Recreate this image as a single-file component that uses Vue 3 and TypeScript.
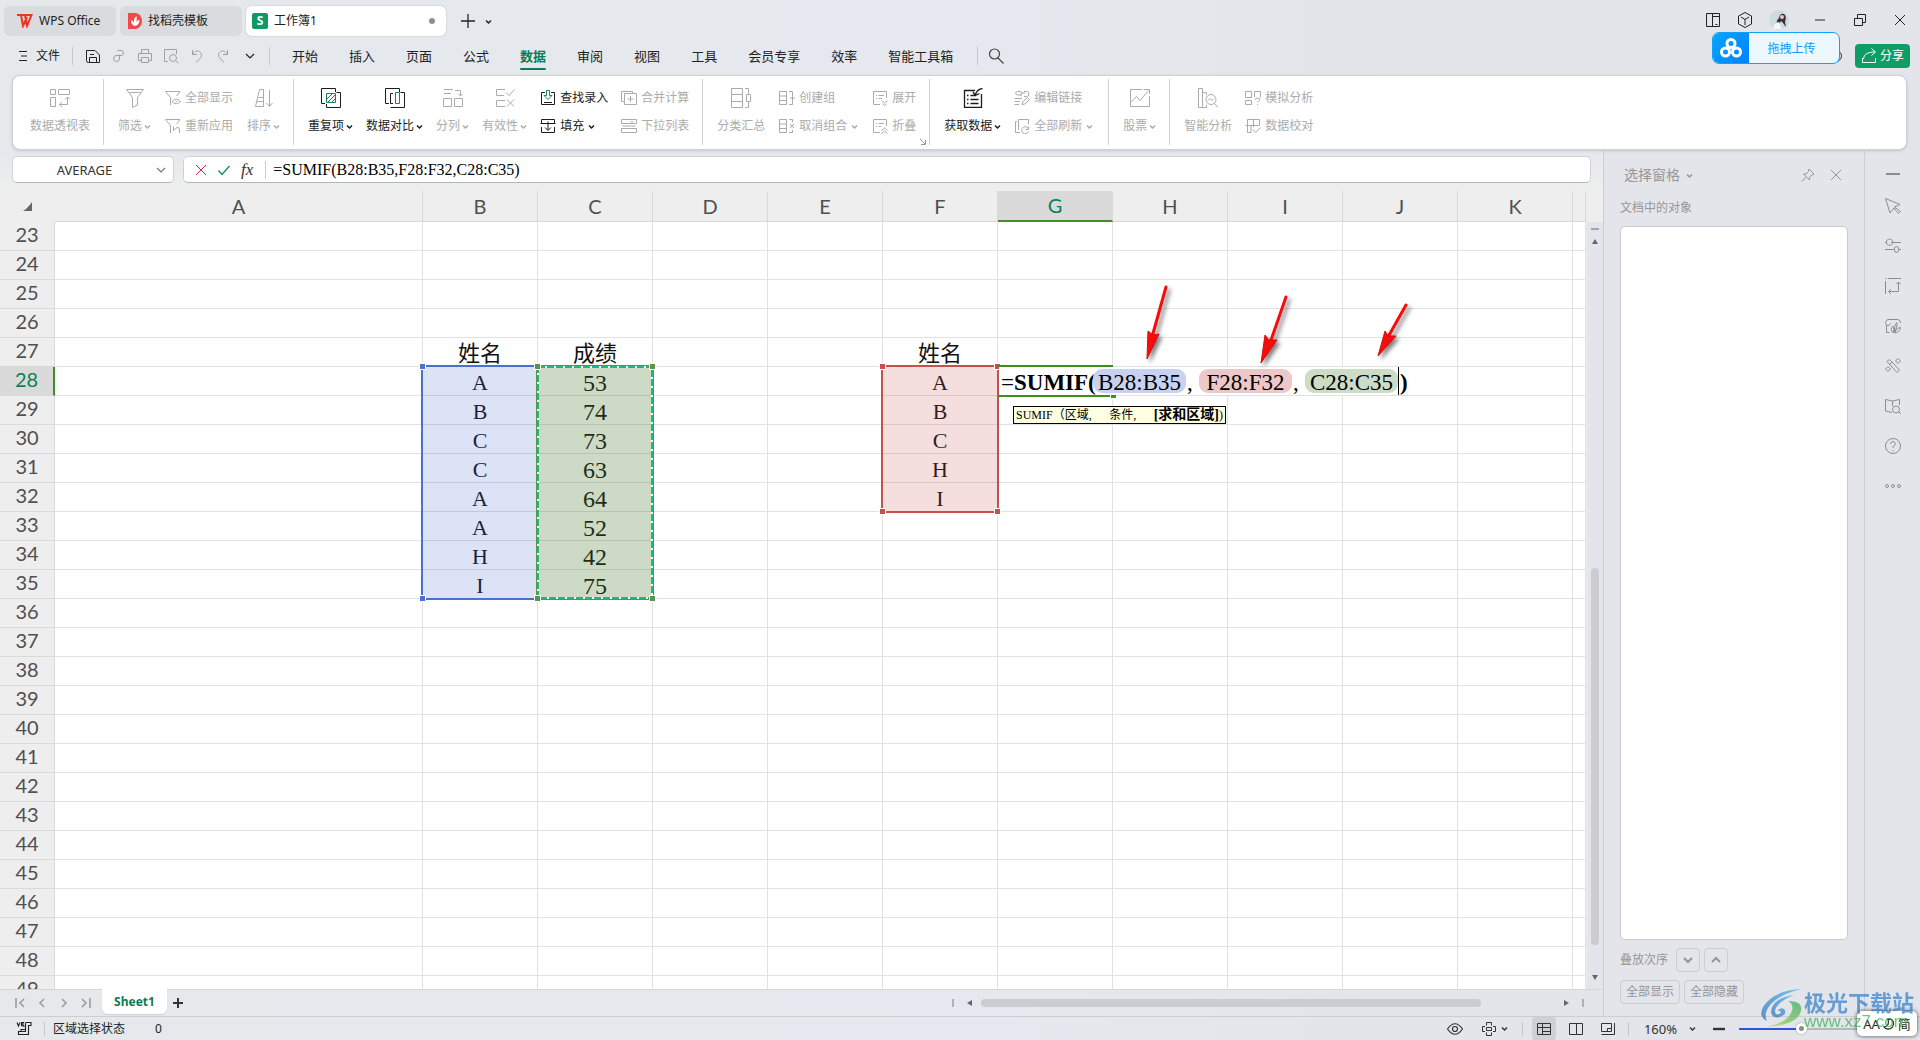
<script setup lang="ts">
import { h, ref } from 'vue'

interface Glyph {
  s: number
  d: string
  g?: string
  w?: number
}

const glyphs: Record<string, Glyph> = {
  burger: { s: 10, d: 'M1 .5H9M3 5H9M1 9.5H9' },
  save: { s: 16, d: 'M1.500 2.500H10L14.500 7V14.500H3.500Q1.500 14.500 1.500 12.500ZM4.500 14V9.500H11.500V14M5 6.500H9' },
  link: { s: 16, d: 'M6.500 2.500H10A2.500 2.500 0 0 1 10 7.500H6A3 3 0 1 0 8.500 11V6.500' },
  print: { s: 16, d: 'M4.500 5.500V1.500H11.500V5.500M4 12.500H1.500V5.500H14.500V12.500H12M4.500 9.500H11.500V14.500H4.500Z' },
  preview: { s: 16, d: 'M5 13.500H1.500V1.500H13.500V6M10 6.500A3.500 3.500 0 1 0 10 13.500A3.500 3.500 0 1 0 10 6.500M12.500 12.500L15.500 15.500' },
  undo: { s: 16, d: 'M3.500 2V6.500H8M3.500 6.500C6 2.500 9 2 11.500 4.500C14 8 11 10.500 7 14.500' },
  redo: { s: 16, d: 'M12.500 2V6.500H8M12.500 6.500C10 2.500 7 2 4.500 4.500C2 8 5 10.500 9 14.500' },
  down: { s: 10, d: 'M1 3L5 7L9 3', w: 1.2 },
  chev: { s: 7, d: 'M1 2.500L3.500 5L6 2.500', w: 1.5 },
  search: { s: 16, d: 'M6.500 1A5 5 0 1 0 6.500 11A5 5 0 1 0 6.500 1M10 10L15.500 15.500', w: 1.2 },
  pivot: { s: 20, d: 'M.5 1.500H5.500V6.500H.5ZM8.500 1.500H19.500V6.500H8.500ZM.5 9.500H5.500V18.500H.5ZM9.500 16.500H17.500V9M15 11.500L17.500 9L20 11.500M12 14L9.500 16.500L12 19' },
  filter: { s: 20, d: 'M1.500 1.500H18.500L12.500 9.500V17L7.500 19.500V9.500ZM4.500 4.500H15.500' },
  filtereye: { s: 16, d: 'M5.500 15V7.500L.5 1.500H15L11.500 6M7 11.500Q11 7 15.500 11.500Q11 16 7 11.500M10.500 11.500H12' },
  refilter: { s: 16, d: 'M5.500 15V7.500L.5 1.500H15L11.500 6M8.500 8.500V12.500M8.500 12.500L12 9.500Q15 9 14.500 12V15' },
  sort: { s: 20, d: 'M5.500 1.500H9.500V18.500H1.500L5.500 1.500M4.500 9.500H9M3 13.500H9M15.500 2V18M12.500 15L15.500 18.500L18.500 15' },
  dup: { s: 20, d: 'M4 15.500H.5V.5H14.500V4M15.500 4.500H19.500V19.500H5.500V16', g: 'M5.500 5.500H14.500V14.500H5.500ZM6 11L11 6M7 14L14 7M10.500 14.500L14.500 10.500' },
  compare: { s: 20, d: 'M4 15.500H.5V.5H14.500V4M8 5.500H5.500V15.500H8M15.500 4.500H19.500V19.500H5.500', g: 'M10.500 4.500H14.500V15.500H10.500Z' },
  split: { s: 20, d: 'M1 1.500H10M1 5.500H8M.5 10.500H8.500V18.500H.5ZM11.500 10.500H19.500V18.500H11.500ZM12 2.500H17.500V8M15 5.500L17.500 8L20 5.500' },
  valid: { s: 20, d: 'M10 1.500H1.500V7.500H9M10 12.500H1.500V18.500H10M11 4.500L14 7.500L19.500 1.500M12 11.500L19 18.500M19 11.500L12 18.500' },
  lookup: { s: 16, d: 'M5 2.500H1.500V14.500H14.500V2.500H11M4 12.500H12', g: 'M6.500 .5H9.500V5.500H12L8 9.500L4 5.500H6.500Z' },
  fill: { s: 16, d: 'M1.500 5.500V1.500H14.500V5.500M.5 5.500H15.500M1.500 9V14.500H14.500V9M8 3.500V12M5 9.500L8 12.500L11 9.500' },
  merge: { s: 16, d: 'M3.500 11.500H.5V1.500H11.500V3.500M3.500 3.500H15.500V14.500H3.500ZM9.500 6V12M6.500 9H12.500' },
  droplist: { s: 16, d: 'M.5 1.500H15.500V5.500H.5ZM1.500 8H14.500M.5 10.500H15.500V14.500H.5ZM9.500 3L11 4.500L12.500 3' },
  subtotal: { s: 20, d: 'M.5 .5H11.500V19.500H.5ZM.5 6.500H11.500M.5 13.500H11.500M14 .5H17.500V6M14 19.500H17.500V14M15.500 6.500H19.500V13.500H15.500Z' },
  group: { s: 16, d: 'M.5 1.500H7.500V14.500H.5ZM.5 6H7.500M.5 10.500H7.500M10 1.500H13.500V14.500H10M11 8H16' },
  ungroup: { s: 16, d: 'M.5 1.500H7.500V14.500H.5ZM.5 6H7.500M.5 10.500H7.500M10 1.500H13.500V4M10 14.500H13.500V12M11 6L15 10M15 6L11 10' },
  expand: { s: 16, d: 'M8 14.500H1.500V1.500H14.500V8M4 5.500H5M6.500 5.500H12M4 8.500H5M6.500 8.500H10M9.500 10.500L12.500 13L15.500 10.500M10.500 14L12.500 15.500L14.500 14' },
  collapse: { s: 16, d: 'M8 14.500H1.500V1.500H14.500V8M4 5.500H5M6.500 5.500H12M4 8.500H5M6.500 8.500H9M9.500 12.500L12.500 10L15.500 12.500M9.500 15.500L12.500 13L15.500 15.500' },
  getdata: { s: 20, d: 'M12 2.500H1.500V19.500H18.500V6M4 7.500H5.500M7.500 7.500H13M4 11.500H5.500M7.500 11.500H15.500M4 15.500H5.500M7.500 15.500H15.500M19.500 .5C15 1 13.500 3 12.500 6.500M10 4L12.500 7.500L16.500 5.500', w: 1.3 },
  editlink: { s: 16, d: 'M8 5H3.500A1.700 1.700 0 0 1 3.500 1.500H6A1.700 1.700 0 0 1 6 5M7 3H11M10 1.500H12.500A1.700 1.700 0 0 1 12.500 6.500H10M.5 8.500H8M.5 11.500H6M.5 14.500H5M8 14.500L9 11.500L13.500 7.500L15.500 9.500L11 14Z' },
  refresh: { s: 16, d: 'M3 3.500H1.500V14.500H6M4.500 12V1.500H14.500V6M14.500 8.500V11.500H11.500M14.500 11A3.500 3.500 0 1 0 14.500 13.500' },
  stock: { s: 20, d: 'M12 1.500H.5V18.500H19.500V8M1 14.500L6.500 8.500L10 12.500L18.500 2.500M13.500 1.500H19.500V6' },
  analyze: { s: 20, d: 'M.5 .5H4.500V19.500H.5ZM4.500 4.500H8.500V7M4.500 19.500H8.500V17M13 6.500A5 5 0 1 0 13 16.500A5 5 0 1 0 13 6.500M16.500 15.500L20 19.500M10 12.500L12 10.500L14 12.500L16 10.500' },
  whatif: { s: 16, d: 'M.5 1.500H6.500V7.500H.5ZM9.500 1.500H15.500V7.500M.5 10.500H6.500V14.500H.5ZM9.500 1.500V7M10 10Q10.500 8 13 8Q15.500 8.500 14.500 10.500L12.500 12M12.500 14V15' },
  check2: { s: 16, d: 'M6 14.500H2.500V1.500H14.500V7.500M.5 7.500H14M8.500 1.500V9M6 14.500V8M8 11.500L10.500 14.500L15.500 9.500' },
  twopane: { s: 16, d: 'M1.500 1.500H14.500V14.500H1.500ZM7.500 2V14M8 4.500H14M10.500 12.500H12.500' },
  cube: { s: 16, d: 'M8 .5L14.500 4V12L8 15.500L1.500 12V4ZM4 5L8 7.500L12 5M8 7.500V13' },
  min: { s: 12, d: 'M1 6H11' },
  restore: { s: 12, d: 'M.5 4.500H8.500V11.500H.5ZM3.500 4V.5H11.500V8.500H9' },
  close: { s: 12, d: 'M1 1L11 11M11 1L1 11' },
  share: { s: 16, d: 'M1.500 10V14.500H14.500V10M2.500 11C3 6 7 4 14 4M10.500 .5L14.500 4L10.500 7.500' },
  tick: { s: 12, d: 'M.5 6.500L4 10.500L11.500 2', w: 1.3 },
  pin: { s: 14, d: 'M8 1L13 6L12 7H10.500L8.500 9.500V12L2.500 6H5L7.500 3.500V2ZM5 9.500L.5 13.500' },
  plus: { s: 14, d: 'M7 0V14M0 7H14', w: 1.3 },
  bplus: { s: 10, d: 'M5 0V10M0 5H10', w: 2 },
  dash: { s: 14, d: 'M0 7H14', w: 2 },
  cursor: { s: 16, d: 'M.5 .5L15 6.500L9.500 9L15.500 13.500L13.500 15.500L9 10L5 15Z' },
  sliders: { s: 16, d: 'M0 4.500H2M6.500 4.500H16M4.500 1.500A2.200 3 0 1 0 4.500 7A2.200 3 0 1 0 4.500 1.500M0 11.500H9M14 11.500H16M11.500 8.500A2.200 3 0 1 0 11.500 14.500A2.200 3 0 1 0 11.500 8.500' },
  frame: { s: 16, d: 'M0 .5H1.500M3 .5H16M.5 3V16M13.500 4V13.500H4M11 6.500L13.500 4L16 6.500M6 11L3.500 13.500L6 16' },
  image: { s: 16, d: 'M4.500 14.500H1.500V7.500Q-1 4 2.500 1.500H13Q16 2.500 15.500 5M1.500 7.500Q4.500 8.500 5.500 5.500M8 15Q4.500 11 8 8Q10 12 8 15M9.500 14.500Q9 7 12 4.500Q12.500 9 9.500 14.500M10 15Q11 10 15.500 9.500Q15 14 10 15' },
  wand: { s: 16, d: 'M2 3.500L4.500 1.500L14.500 12L12 14.500ZM4.500 6.500L7 4M13 .5L15.500 3L13 5.500L10.500 3ZM3 8.500L5.500 11L3 13.500L.5 11Z' },
  book: { s: 16, d: 'M7 14.500L.5 13V1.500L7.500 3L14.500 1.500V7M7.500 3V8M11 8A3.500 3.500 0 1 0 11 15A3.500 3.500 0 1 0 11 8M13.500 13.500L16 16' },
  help: { s: 16, d: 'M8 .5A7.500 7.500 0 1 0 8 15.500A7.500 7.500 0 1 0 8 .5M5.500 6Q6 3.500 8 3.500Q10.500 4 10.300 6Q10 7.500 8 8.500V10M8 12V13.300' },
  more: { s: 16, d: 'M2 6.500A1.500 1.500 0 1 0 2 9.500A1.500 1.500 0 1 0 2 6.500M8 6.500A1.500 1.500 0 1 0 8 9.500A1.500 1.500 0 1 0 8 6.500M14 6.500A1.500 1.500 0 1 0 14 9.500A1.500 1.500 0 1 0 14 6.500' },
  first: { s: 10, d: 'M1 0V10M9 1L5 5L9 9', w: 1.6 },
  prev: { s: 10, d: 'M7 1L3 5L7 9', w: 1.6 },
  next: { s: 10, d: 'M3 1L7 5L3 9', w: 1.6 },
  last: { s: 10, d: 'M9 0V10M1 1L5 5L1 9', w: 1.6 },
  macro: { s: 16, d: 'M1 1.500L2.500 5L4 1.500M5.500 5V1.500H7.500L6.500 3L8 5H5.500M9.500 1.500H15V4.500H12.500V13.500H2.500V10.500H9.500V2M5 10V8.500H9', w: 1.1 },
  eye: { s: 16, d: 'M.5 8Q8 -2.500 15.500 8Q8 18.500 .5 8ZM8 5.500A2.500 2.500 0 1 0 8 10.500A2.500 2.500 0 1 0 8 5.500', w: 1.2 },
  cross: { s: 14, d: 'M4.500 3.500V.5H9.500V3.500M4.500 10.500V13.500H9.500V10.500M3 4.500H.5V9.500H3M11 4.500H13.500V9.500H11M4.500 5.500H9.500V8.500H4.500Z' },
  grid: { s: 14, d: 'M.5 1.500H13.500V12.500H.5ZM.5 5.500H13.500M5.500 1.500V12.500M5.500 9.500H13.500' },
  columns: { s: 14, d: 'M.5 1.500H13.500V12.500H.5ZM7.500 1.500V12.500' },
  pagebreak: { s: 14, d: 'M.5 1.500H10.500V9.500H.5ZM13.500 1V12.500H.5M6.500 9V6.500H10' },
  launch: { s: 6, d: 'M0 0L5 5M5.500 1V5.500H1' },
  cmin: { s: 12, d: 'M0 6H12', w: 2.4 },
  chevDown: { s: 10, d: 'M1 3L5 7L9 3', w: 2 },
  chevUp: { s: 10, d: 'M1 7L5 3L9 7', w: 2 },
}

const Icon = (props: { name: string }) => {
  const i = glyphs[props.name]
  const kids = [h('path', { d: i.d, stroke: 'currentColor' })]
  if (i.g) kids.push(h('path', { d: i.g, stroke: '#0b8a5c' }))
  return h(
    'svg',
    { class: 'icon', width: i.s, height: i.s, viewBox: `0 0 ${i.s} ${i.s}`, fill: 'none', 'stroke-width': i.w ?? 1, 'aria-hidden': 'true' },
    kids,
  )
}
Icon.props = ['name']

const quick = ['save', 'link', 'print', 'preview', 'undo', 'redo']
const menus = ['开始', '插入', '页面', '公式', '数据', '审阅', '视图', '工具', '会员专享', '效率', '智能工具箱']

interface Cmd { icon: string; label: string; on?: boolean; more?: boolean }
const big = (icon: string, label: string, more = false, on = false): Cmd[] => [{ icon, label, more, on }]
const groups: Cmd[][][] = [
  [big('pivot', '数据透视表')],
  [
    big('filter', '筛选', true),
    [{ icon: 'filtereye', label: '全部显示' }, { icon: 'refilter', label: '重新应用' }],
    big('sort', '排序', true),
  ],
  [
    big('dup', '重复项', true, true),
    big('compare', '数据对比', true, true),
    big('split', '分列', true),
    big('valid', '有效性', true),
    [{ icon: 'lookup', label: '查找录入', on: true }, { icon: 'fill', label: '填充', on: true, more: true }],
    [{ icon: 'merge', label: '合并计算' }, { icon: 'droplist', label: '下拉列表' }],
  ],
  [
    big('subtotal', '分类汇总'),
    [{ icon: 'group', label: '创建组' }, { icon: 'ungroup', label: '取消组合', more: true }],
    [{ icon: 'expand', label: '展开' }, { icon: 'collapse', label: '折叠' }],
  ],
  [
    big('getdata', '获取数据', true, true),
    [{ icon: 'editlink', label: '编辑链接' }, { icon: 'refresh', label: '全部刷新', more: true }],
  ],
  [big('stock', '股票', true)],
  [
    big('analyze', '智能分析'),
    [{ icon: 'whatif', label: '模拟分析' }, { icon: 'check2', label: '数据校对' }],
  ],
]

const cols = 'ABCDEFGHIJK'.split('')
const firstRow = 23
const rows = Array.from({ length: 27 }, (_, i) => firstRow + i)
const cells: Record<string, string> = { B27: '姓名', C27: '成绩', F27: '姓名' }
'ABCCAAHI'.split('').forEach((v, i) => (cells['B' + (28 + i)] = v))
;[53, 74, 73, 63, 64, 52, 42, 75].forEach((v, i) => (cells['C' + (28 + i)] = String(v)))
'ABCHI'.split('').forEach((v, i) => (cells['F' + (28 + i)] = v))

// Grid geometry shared by the range outlines and the in-cell editor
const colW = 115
const rowH = 29
const colX = (c: string) => (c === 'A' ? 55 : 423 + (cols.indexOf(c) - 1) * colW)
const rowY = (r: number) => 31 + (r - firstRow) * rowH
const box = (c: string, r: number, n: number) => ({
  left: colX(c) - 2 + 'px',
  top: rowY(r) - 2 + 'px',
  width: colW + 3 + 'px',
  height: n * rowH + 3 + 'px',
})
const ranges = [
  { cls: 'blue', style: box('B', 28, 8) },
  { cls: 'green', style: box('C', 28, 8), ants: true },
  { cls: 'red', style: box('F', 28, 5) },
]
const arrows = [
  { line: 'M1166 96L1152 146', head: '1147,168 1148,140 1153,144 1159,143' },
  { line: 'M1286 106L1270 152', head: '1261,172 1265,144 1269,149 1277,149' },
  { line: 'M1406 114L1388 146', head: '1378,165 1385,140 1388,145 1396,145' },
]
const side = ['cursor', 'sliders', 'frame', 'image', 'wand', 'book', 'help', 'more']
const nameBox = ref('AVERAGE')
const formula = ref('=SUMIF(B28:B35,F28:F32,C28:C35)')
const zoom = ref(50)
</script>

<template>
  <div class="app">
    <header class="title">
      <button class="tab t1">
        <svg width="16" height="14" viewBox="0 0 16 14" fill="none" stroke="#ee3524" stroke-width="2"><path d="M0 1H4L6 12L10 3M4 1H8L10 12L14.500 1H9" /></svg>
        <span>WPS Office</span>
      </button>
      <button class="tab t2">
        <svg width="14" height="16" viewBox="0 0 14 16"><path d="M0 0H7A7 8 0 0 1 7 16H0Z" fill="#f0484b" /><path d="M7 13Q2 11 3.500 7Q5.500 8 6 10Q5.500 5 8.500 3Q9 6 8.500 9Q9.500 7 11.500 7Q11.500 12 7 13" fill="#fff" /></svg>
        <span>找稻壳模板</span>
      </button>
      <button class="tab t3">
        <span class="sicon">S</span><span>工作簿1</span><i class="dot"></i>
      </button>
      <button class="ib newtab" aria-label="新建"><Icon name="plus" /></button>
      <button class="ib" aria-label="更多"><Icon name="chev" /></button>
      <div class="win">
        <button class="ib" aria-label="分屏"><Icon name="twopane" /></button>
        <button class="ib" aria-label="应用"><Icon name="cube" /></button>
        <svg class="avatar" width="20" height="20" viewBox="0 0 20 20"><circle cx="10" cy="10" r="10" fill="#cddbe2" /><path d="M8 17Q6 11 10 8Q11 3 15 4Q18 6 16 12L17 17L14 13L12 11Z" fill="#3a3036" /><circle cx="13" cy="7" r="2" fill="#eec9b8" /><path d="M4 19Q5 12 10 12L13 19Z" fill="#f2f6f8" /></svg>
        <button class="ib wb" aria-label="最小化"><Icon name="min" /></button>
        <button class="ib wb" aria-label="还原"><Icon name="restore" /></button>
        <button class="ib wb" aria-label="关闭"><Icon name="close" /></button>
      </div>
    </header>

    <nav class="menu">
      <button class="ib file"><Icon name="burger" /><span>文件</span></button>
      <i class="sep"></i>
      <div class="quick">
        <button v-for="(q, i) in quick" :key="q" class="ib" :class="{ off: i > 0 }" :aria-label="q"><Icon :name="q" /></button>
        <button class="ib more" aria-label="自定义"><Icon name="down" /></button>
      </div>
      <i class="sep"></i>
      <div class="menus">
        <button v-for="m in menus" :key="m" class="ib" :class="{ cur: m === '数据' }">{{ m }}</button>
      </div>
      <i class="sep"></i>
      <button class="ib find" aria-label="搜索"><Icon name="search" /></button>
      <i class="status-ring"></i>
      <button class="share"><Icon name="share" /><span>分享</span></button>
    </nav>

    <section class="ribbon">
      <div v-for="(g, gi) in groups" :key="gi" class="group">
        <div v-for="(c, ci) in g" :key="ci" class="col">
          <button v-for="b in c" :key="b.label" class="cmd" :class="{ big: c.length === 1, on: b.on }">
            <Icon :name="b.icon" />
            <span class="lab">{{ b.label }}<Icon v-if="b.more" name="chev" /></span>
          </button>
        </div>
        <Icon v-if="gi === 3" class="launch" name="launch" />
      </div>
    </section>

    <div class="work">
      <main class="main">
        <div class="fbar">
          <div class="namebox">
            <input v-model="nameBox" aria-label="名称框" />
            <Icon name="down" />
          </div>
          <div class="fbox">
            <button class="ib x" aria-label="取消"><Icon name="close" /></button>
            <button class="ib v" aria-label="输入"><Icon name="tick" /></button>
            <button class="ib fx">fx</button>
            <input v-model="formula" aria-label="编辑栏" />
          </div>
        </div>

        <div class="sheetrow">
          <div class="sheet">
            <table>
              <colgroup>
                <col class="c0" /><col class="ca" /><col v-for="c in cols.slice(1)" :key="c" class="cn" /><col />
              </colgroup>
              <thead>
                <tr>
                  <th class="corner"><svg width="10" height="10" viewBox="0 0 10 10"><path d="M9 0V9H0Q4 7 9 0" fill="#666" /></svg></th>
                  <th v-for="c in cols" :key="c" :class="{ hot: c === 'G' }">{{ c }}</th>
                  <th></th>
                </tr>
              </thead>
              <tbody>
                <tr v-for="r in rows" :key="r">
                  <th :class="{ hot: r === 28 }">{{ r }}</th>
                  <td v-for="c in cols" :key="c" :class="{ num: c === 'C' && r > 27 }">{{ cells[c + r] }}</td>
                  <td></td>
                </tr>
              </tbody>
            </table>

            <div v-for="r in ranges" :key="r.cls" class="range" :class="r.cls" :style="r.style">
              <svg v-if="r.ants" class="ants" width="118" height="235" viewBox="0 0 118 235">
                <rect x="2" y="2" width="114" height="231" stroke="#fff" stroke-width="2" fill="none" />
                <rect x="2" y="2" width="114" height="231" stroke="#1fb87c" stroke-width="2" fill="none" stroke-dasharray="7 2" />
              </svg>
              <i class="h a"></i><i class="h b"></i><i class="h c"></i><i class="h d"></i>
            </div>

            <div class="cellbox" :style="{ left: colX('G') + 'px', top: rowY(28) - 2 + 'px', width: colW + 'px', height: rowH + 3 + 'px' }"></div>
            <div class="editor" role="textbox" aria-label="单元格编辑" :style="{ left: colX('G') + 1 + 'px', top: rowY(28) + 'px' }">
              <span class="fn">=<b>SUMIF(</b></span><mark class="mb">B28:B35</mark><span class="comma">,</span><mark class="mr">F28:F32</mark><span class="comma">,</span><mark class="mg">C28:C35</mark><i class="caret"></i><b class="txt">)</b>
            </div>
            <div class="tip" :style="{ left: colX('G') + 15 + 'px', top: rowY(29) + 10 + 'px' }">
              <span>SUMIF（区域,</span><span>条件,</span><span><b>[求和区域]</b>)</span>
            </div>
            <svg class="arrows" width="1586" height="300" viewBox="0 0 1586 300">
              <g v-for="a in arrows" :key="a.line">
                <path :d="a.line" stroke="#f80b0b" stroke-width="3" stroke-linecap="round" />
                <polygon :points="a.head" fill="#f80b0b" stroke="#d01010" stroke-width="1" />
              </g>
            </svg>
          </div>
          <div class="vscroll">
            <i class="vline"></i><i class="up"></i>
            <i class="vspace"></i><i class="vthumb"></i><i class="vend"></i><i class="dn"></i>
          </div>
        </div>

        <div class="tabbar">
          <button class="ib" aria-label="第一个"><Icon name="first" /></button>
          <button class="ib" aria-label="上一个"><Icon name="prev" /></button>
          <button class="ib" aria-label="下一个"><Icon name="next" /></button>
          <button class="ib" aria-label="最后一个"><Icon name="last" /></button>
          <button class="sheettab">Sheet1</button>
          <button class="ib add" aria-label="新建工作表"><Icon name="bplus" /></button>
          <div class="hscroll"><i class="bar"></i><i class="lt"></i><i class="hthumb"></i><i class="hend"></i><i class="rt"></i><i class="bar"></i></div>
        </div>
      </main>

      <aside class="panel">
        <div class="phead"><span>选择窗格</span><Icon name="chev" /><button class="ib pin" aria-label="固定"><Icon name="pin" /></button><button class="ib" aria-label="关闭窗格"><Icon name="close" /></button></div>
        <div class="plabel">文档中的对象</div>
        <div class="plist"></div>
        <div class="prow"><span>叠放次序</span><button class="pb sq" aria-label="下移"><Icon name="chevDown" /></button><button class="pb sq" aria-label="上移"><Icon name="chevUp" /></button></div>
        <div class="prow two"><button class="pb">全部显示</button><button class="pb">全部隐藏</button></div>
      </aside>

      <aside class="side">
        <button class="ib" aria-label="收起"><Icon name="dash" /></button>
        <button v-for="s in side" :key="s" class="ib" :aria-label="s"><Icon :name="s" /></button>
      </aside>
    </div>

    <footer class="status">
      <button class="ib macro" aria-label="宏"><Icon name="macro" /></button>
      <i class="ssep"></i>
      <span class="state">区域选择状态</span><span>0</span>
      <div class="sright">
        <button class="ib" aria-label="护眼"><Icon name="eye" /></button>
        <button class="ib cr" aria-label="阅读"><Icon name="cross" /><Icon name="chev" /></button>
        <i class="ssep"></i>
        <button class="ib view act" aria-label="普通"><Icon name="grid" /></button>
        <button class="ib view" aria-label="分页"><Icon name="columns" /></button>
        <button class="ib view" aria-label="页面"><Icon name="pagebreak" /></button>
        <i class="ssep"></i>
        <button class="ib pct">160%<Icon name="chev" /></button>
        <button class="ib minus" aria-label="缩小"><Icon name="cmin" /></button>
        <input v-model="zoom" class="zoom" type="range" min="0" max="100" aria-label="缩放" />
      </div>
    </footer>

    <button class="upload">
      <span class="up-ic"><svg width="22" height="20" viewBox="0 0 22 20" fill="none" stroke="#fff" stroke-width="3"><circle cx="11" cy="5.500" r="4" /><circle cx="5.500" cy="14" r="4" /><circle cx="16.500" cy="14" r="4" /></svg></span>
      <span class="up-tx">拖拽上传</span>
    </button>

    <div class="ime"><span>AA</span><svg width="12" height="12" viewBox="0 0 12 12" fill="none" stroke="#333" stroke-width="1.300"><path d="M5 1Q11 1 10.500 6Q10 11 5 11Q2 11 1 9Q7 8 5 1Z" /></svg><span>简</span></div>

    <div class="mark">
      <svg width="44" height="38" viewBox="0 0 44 38">
        <defs>
          <linearGradient id="sw1" x1="0" y1="1" x2="1" y2="0"><stop offset="0" stop-color="#2f6fb8" /><stop offset="1" stop-color="#49b4ee" /></linearGradient>
          <linearGradient id="sw2" x1="0" y1="1" x2="1" y2="0"><stop offset="0" stop-color="#b6d84a" /><stop offset="1" stop-color="#2ea866" /></linearGradient>
        </defs>
        <path d="M42 0Q14 1 3 18Q-2 28 7 32Q3 24 11 15Q20 5 42 0Z" fill="url(#sw1)" />
        <path d="M34 6Q12 9 11 23Q12 30 20 28Q28 25 24 20Q21 18 17 22Q20 21 21 23Q20 26 16 25Q13 21 19 15Q24 10 34 6Z" fill="url(#sw1)" />
        <path d="M28 12Q43 12 41 22Q38 36 6 38Q26 34 31 24Q35 16 28 12Z" fill="url(#sw2)" />
      </svg>
      <div><p class="cn">极光下载站</p><p class="en">www.xz7.com</p></div>
    </div>
  </div>
</template>

<style>
html, body { margin: 0; height: 100%; overflow: hidden; }
#app { height: 100%; }
.icon { display: block; flex: none; }
</style>

<style scoped>
.app {
  position: relative; height: 100%; display: flex; flex-direction: column; overflow: hidden;
  background: linear-gradient(90deg, #e5e9eb 0%, #e5e8ee 50%, #e4e5ea 72%);
  font: 12px/20px "Noto Sans", "Noto Sans CJK SC", sans-serif; color: #222;
}
.app * { box-sizing: border-box; }
button { font: inherit; color: inherit; border: 0; background: none; padding: 0; margin: 0; }
input { font: inherit; color: inherit; border: 0; background: none; padding: 0; margin: 0; outline: 0; min-width: 0; }
p { margin: 0; }
.ib { display: flex; align-items: center; justify-content: center; white-space: nowrap; flex: none; }

.title { display: flex; align-items: center; gap: 4px; height: 42px; flex: none; padding-left: 4px; }
.tab { display: flex; align-items: center; height: 30px; border-radius: 6px; background: #d9dcde; white-space: nowrap; flex: none; }
.t1 { width: 112px; padding-left: 13px; gap: 6px; }
.t2 { width: 122px; padding-left: 8px; gap: 6px; }
.t3 { width: 200px; padding: 0 11px 0 6px; gap: 6px; background: #fff; box-shadow: 0 0 2px #b8bcc2; }
.sicon { width: 16px; height: 16px; border-radius: 2px; background: #109963; color: #fff; font: bold 12px/16px "Noto Sans", sans-serif; text-align: center; }
.dot { width: 6px; height: 6px; border-radius: 50%; background: #8d8f92; margin-left: auto; }
.newtab { margin: 0 6px 0 11px; }
.win { margin-left: auto; display: flex; align-items: center; padding-right: 14px; height: 38px; margin-bottom: 2px; }
.win .ib:nth-child(2) { margin: 0 16px; }
.win .wb { margin-left: 28px; }
.win .avatar + .wb { margin-left: 25px; }

.menu { display: flex; align-items: center; height: 28px; flex: none; padding-left: 18px; }
.file { gap: 8px; margin-right: 12px; }
.sep { width: 1px; height: 18px; background: #c6c9cc; flex: none; }
.quick { display: flex; gap: 10px; padding: 0 14px 0 12px; }
.quick .off { color: #9fa2a5; }
.quick .more { padding: 0 0 0 4px; }
.menus { display: flex; gap: 31px; padding: 0 24px 0 22px; font-size: 13px; }
.menus .cur { color: #0a7c55; font-weight: bold; position: relative; }
.menus .cur::after { content: ""; position: absolute; left: 0; right: 0; bottom: -4px; height: 2px; background: #0a7c55; border-radius: 1px; }
.find { margin-left: 10px; color: #444; }
.status-ring { margin-left: auto; width: 12px; height: 12px; border: 1px solid #333; border-radius: 50%; flex: none; }
.share { display: flex; align-items: center; gap: 3px; height: 24px; padding: 0 6px; margin: 0 10px 0 13px; background: #0f9d66; color: #fff; border-radius: 4px; }

.ribbon { display: flex; flex: none; margin: 5px 13px 0 12px; height: 75px; background: #fff; border: 1px solid #cdd0d5; border-radius: 8px; box-shadow: 0 1px 3px #c3c6cc; padding-left: 3px; position: relative; z-index: 1; }
.group { display: flex; gap: 13px; padding: 12px 14px 0; position: relative; }
.group:not(:last-child)::after { content: ""; position: absolute; right: 0; top: 3px; height: 66px; width: 1px; background: #d2d2d2; }
.group:nth-child(2) { gap: 14px; }
.group:nth-child(4) { gap: 14px; }
.group:nth-child(5) { padding-right: 16px; }
.col { display: flex; flex-direction: column; gap: 8px; }
.cmd { display: flex; align-items: center; gap: 4px; height: 20px; color: #ababab; white-space: nowrap; }
.cmd.big { flex-direction: column; gap: 8px; height: 48px; }
.cmd.on { color: #1c1c1c; }
.lab { display: flex; align-items: center; gap: 4px; line-height: 20px; }
.big .lab { gap: 2px; }
.launch { position: absolute; right: 4px; bottom: 4px; color: #999; }

.work { flex: 1; display: flex; min-height: 0; }
.main { flex: 1; min-width: 0; display: flex; flex-direction: column; }
.fbar { display: flex; gap: 9px; height: 41px; padding: 6px 12px 8px 12px; flex: none; background: linear-gradient(#e5e8ed, #eeeeee); }
.namebox { display: flex; align-items: center; width: 162px; background: #fff; border: 1px solid #cfd3d6; border-bottom-color: #b5b5b5; border-radius: 5px; padding-right: 7px; color: #333; }
.namebox input { flex: 1; text-align: center; font-size: 13px; }
.namebox svg { color: #777; }
.fbox { flex: 1; display: flex; align-items: center; background: #fff; border: 1px solid #cfd3d6; border-bottom-color: #b5b5b5; border-radius: 5px; padding-left: 11px; }
.fbox .x { color: #c9304f; }
.fbox .v { color: #148a5c; margin-left: 11px; }
.fbox .fx { font: italic 17px/20px "Liberation Serif", serif; margin: 0 12px 0 11px; color: #333; }
.fbox input { flex: 1; border-left: 1px solid #ccc; padding-left: 7px; height: 18px; font: 16px/18px "Liberation Serif", serif; color: #000; }

.sheetrow { flex: 1; display: flex; min-height: 0; }
.sheet { flex: 1; position: relative; overflow: hidden; background: #fff; min-width: 0; border-right: 1px solid #ececec; }
table { width: 100%; table-layout: fixed; border-collapse: separate; border-spacing: 0; }
.c0 { width: 55px; }
.ca { width: 368px; }
.cn { width: 115px; }
th, td { padding: 0; border: solid #e1e1e1; border-width: 0 1px 1px 0; overflow: hidden; white-space: nowrap; text-align: center; vertical-align: middle; }
th { background: #eee; border-color: #d9d9d9; font: 20px/24px Lato, sans-serif; color: #505050; }
thead th { height: 31px; padding-bottom: 1px; }
thead .corner { border-right-color: #eee; border-bottom-color: #eee; }
.corner svg { display: block; margin: 2px 0 0 23px; }
tbody th, td { height: 29px; }
tbody th { line-height: 22px; padding-bottom: 5px; }
td { font: 22px/24px "Liberation Serif", "Noto Sans CJK SC", serif; color: #111; padding-top: 3px; }
td.num { font-size: 24px; }
.hot { background: #dadada; color: #0c7f55; }
thead .hot { border-bottom: 2px solid #3d8f1f; }
tbody .hot { border-right: 2px solid #3d8f1f; }
.range { position: absolute; border: 2px solid; }
.blue { border-color: #4a70d0; background: rgba(72, 105, 210, .19); }
.green { border-color: #5a9447; background: rgba(70, 120, 40, .27); }
.red { border-color: #c55050; background: rgba(195, 80, 80, .19); }
.ants { position: absolute; left: -2px; top: -2px; }
.h { position: absolute; width: 7px; height: 7px; border: 1px solid #fff; }
.blue .h { background: #4a70d0; }
.green .h { background: #5a9447; }
.red .h { background: #c55050; }
.h.a, .h.b { top: -4px; }
.h.c, .h.d { bottom: -4px; }
.h.a, .h.c { left: -4px; }
.h.b, .h.d { right: -4px; }
.cellbox { position: absolute; border: solid #3d8f1f; border-width: 2px 0; }
.cellbox::after { content: ""; position: absolute; right: -3px; bottom: -3px; width: 5px; height: 4px; background: #3d8f1f; outline: 1px solid #fff; }
.editor { position: absolute; display: flex; align-items: center; height: 28px; padding: 0 4px 0 2px; background: #fff; font: 23px/24px "Liberation Serif", serif; color: #000; white-space: nowrap; }
.fn { width: 92px; }
.fn, .comma, .txt { padding-top: 4px; }
mark { width: 93px; height: 24px; line-height: 28px; border-radius: 9px; text-align: center; color: inherit; }
.mb { background: #c8d2f0; }
.mr { background: #ecc8c8; }
.mg { background: #cddcc7; }
.comma { width: 13px; padding-left: 1px; }
.caret { width: 1px; height: 28px; background: #000; margin-right: 1px; }
.tip { position: absolute; display: flex; align-items: center; justify-content: space-between; width: 213px; height: 18px; padding: 0 2px; border: 1px solid #000; background: #ffffe1; font: 12px/16px "Liberation Serif", "Noto Sans CJK SC", serif; color: #000; white-space: nowrap; }
.tip b { font-size: 14px; }
.arrows { position: absolute; left: 0; top: 0; filter: drop-shadow(3px 3px 2px rgba(0, 0, 0, .5)); pointer-events: none; }

.vscroll { width: 16px; flex: none; display: flex; flex-direction: column; align-items: center; background: linear-gradient(#eee 31px, transparent 31px); padding-top: 37px; }
.vline { width: 8px; height: 2px; background: #a5a5a8; }
.up { border: 3px solid transparent; border-top: 0; border-bottom: 5px solid #666; margin-top: 9px; }
.vspace { flex: 325; }
.vthumb { flex: 378; width: 8px; border-radius: 4px; background: #cbccd0; }
.vend { flex: 30; }
.dn { border: 3px solid transparent; border-bottom: 0; border-top: 5px solid #666; margin-bottom: 9px; }

.tabbar { display: flex; align-items: center; flex: none; height: 27px; border-top: 1px solid #d4d6d9; padding-left: 15px; color: #9a9d9f; }
.tabbar .ib + .ib { margin-left: 12px; }
.sheettab { align-self: flex-start; height: 25px; margin: -1px 0 0 11px; width: 65px; background: #fff; border-radius: 0 0 6px 6px; box-shadow: 0 1px 1px #cfd2d4; color: #0a7c55; font-weight: bold; }
.tabbar .add { color: #333; margin-left: 6px; }
.hscroll { margin-left: auto; width: 41%; display: flex; align-items: center; padding-right: 19px; }
.bar { width: 2px; height: 8px; background: #b0b1b4; }
.lt { border: 3px solid transparent; border-left: 0; border-right: 5px solid #666; margin: 0 9px 0 13px; }
.rt { border: 3px solid transparent; border-right: 0; border-left: 5px solid #666; margin-right: 13px; }
.hthumb { flex: 507; height: 8px; border-radius: 4px; background: #cbccd0; }
.hend { flex: 84; }

.panel { width: 262px; flex: none; border: solid #cdced2; border-width: 0 1px; padding: 14px 16px 12px; display: flex; flex-direction: column; color: #949699; }
.phead { display: flex; align-items: center; gap: 6px; height: 22px; font-size: 14px; padding: 0 6px 0 4px; }
.phead .pin { margin-left: auto; margin-right: 9px; }
.plabel { margin: 12px 0 8px; }
.plist { flex: 1; background: #fff; border: 1px solid #c9cbd3; border-radius: 5px; }
.prow { display: flex; align-items: center; gap: 4px; height: 24px; margin-top: 8px; }
.prow span { margin-right: 4px; }
.pb { display: flex; align-items: center; justify-content: center; height: 24px; width: 60px; border: 1px solid #cdced2; border-radius: 4px; white-space: nowrap; }
.pb.sq { width: 24px; }
.side { width: 55px; flex: none; display: flex; flex-direction: column; align-items: center; padding-top: 16px; color: #8b8d90; }
.side .ib { height: 16px; margin-bottom: 24px; }
.side .ib:first-child { margin-bottom: 16px; }

.status { display: flex; align-items: center; flex: none; height: 24px; border-top: 1px solid #cbced0; padding-left: 16px; }
.ssep { width: 1px; height: 14px; background: #c4c6c9; }
.macro { margin-right: 12px; }
.state { margin: 0 30px 0 8px; }
.sright { margin-left: auto; display: flex; align-items: center; padding-right: 56px; color: #333; }
.cr { gap: 5px; margin: 0 14px 0 19px; }
.view { width: 24px; height: 23px; border-radius: 3px; margin-right: 8px; }
.act { background: #cfd0d4; margin-left: 9px; }
.pct { gap: 12px; margin: 0 17px 0 15px; font-size: 13px; }
.zoom { appearance: none; width: 125px; height: 14px; margin-left: 14px; background: linear-gradient(90deg, #2b55e0 50%, #b6b7ba 50%) center / 100% 2px no-repeat; }
.zoom::-webkit-slider-thumb { appearance: none; width: 11px; height: 11px; border-radius: 50%; background: #8a8b8e; border: 3px solid #fff; box-shadow: 0 0 2px #888; }

.upload { position: absolute; z-index: 2; right: 80px; top: 32px; width: 128px; height: 32px; display: flex; border: 1px solid #12a0ff; border-radius: 7px; overflow: hidden; background: #ecf7ff; }
.up-ic { width: 36px; height: 30px; display: flex; align-items: center; justify-content: center; background: linear-gradient(135deg, #0aa4ff, #0082ff); }
.up-tx { flex: 1; line-height: 31px; text-align: center; color: #0a9bff; padding-right: 5px; }
.ime { position: absolute; right: 3px; bottom: 4px; width: 60px; height: 25px; display: flex; align-items: center; justify-content: center; gap: 3px; background: #fff; border-radius: 5px; box-shadow: 0 0 4px #444; color: #222; font-size: 13px; }
.mark { position: absolute; right: 6px; bottom: 9px; display: flex; opacity: .72; pointer-events: none; z-index: 3; }
.mark .cn { width: auto; font: bold 22px/24px "Noto Sans CJK SC", sans-serif; color: #3580cc; }
.mark .en { font: 17px/18px "Liberation Sans", sans-serif; color: #35b050; }
.mark p { white-space: nowrap; }
</style>
